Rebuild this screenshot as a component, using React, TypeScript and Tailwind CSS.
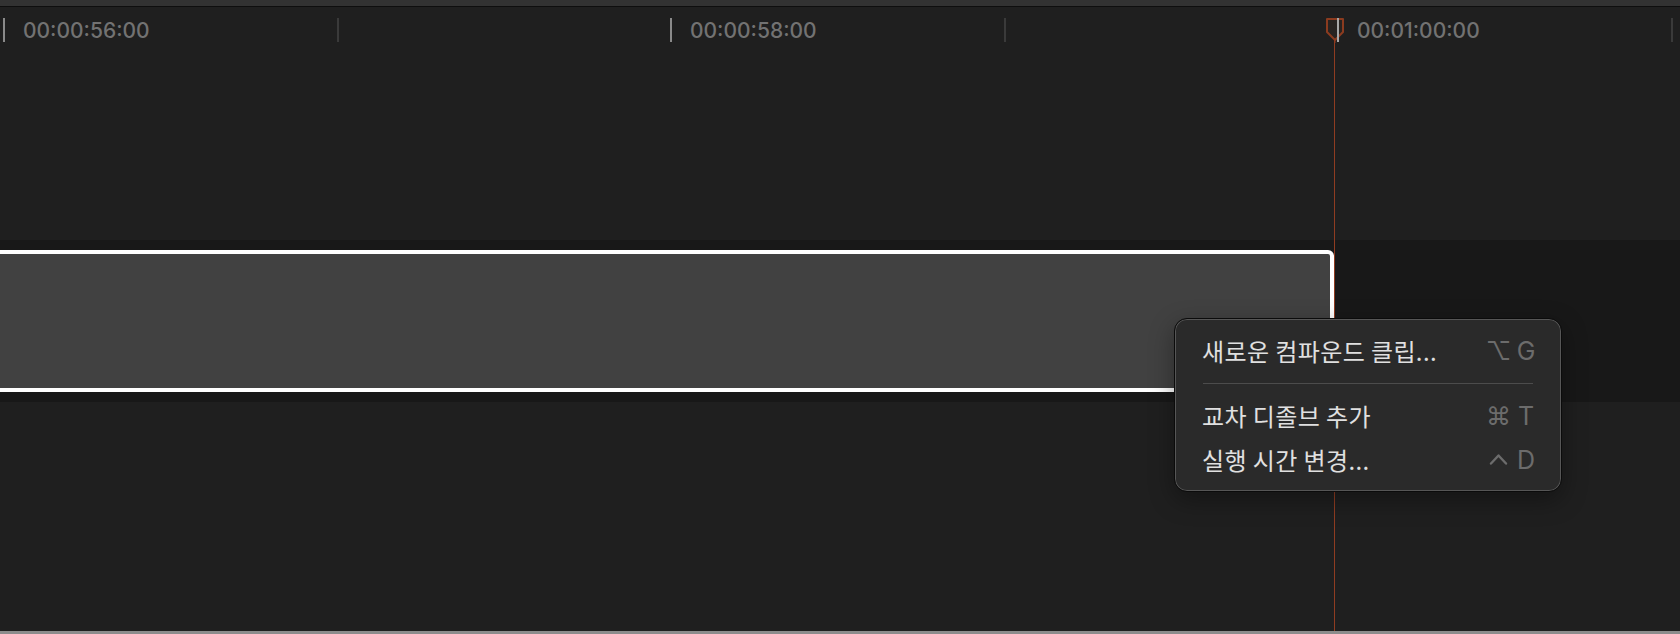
import React from 'react'

const segments = [
  { major: true, label: '00:00:56:00' },
  { major: false },
  { major: true, label: '00:00:58:00' },
  { major: false },
  { major: true, label: '00:01:00:00' },
  { major: false },
]

type Item = { label: string; mod: React.ReactNode; k: string }

const Ctrl = () => (
  <svg width="19" height="12" viewBox="0 0 19 12" className="mt-[-2px]">
    <path d="M2 10.5 L9.5 2.5 L17 10.5" fill="none" stroke="#6c6c6c" strokeWidth="2.4" strokeLinecap="round" strokeLinejoin="round" />
  </svg>
)

const MenuRow = ({ label, mod, k }: Item) => (
  <div className="flex h-[44px] items-center justify-between pl-[27px] pr-[24px]">
    <span
      className="text-[24px] leading-none tracking-[0.4px] text-[#e0e0e0]"
      style={{ fontFamily: '"Noto Sans CJK KR", "Noto Sans", sans-serif' }}
    >
      {label}
    </span>
    <span className="flex items-center gap-[5px] leading-none text-[#6c6c6c]" style={{ fontFamily: 'Inter, "DejaVu Sans", sans-serif' }}>
      <span className="flex w-[23px] justify-center text-[25px]">{mod}</span>
      <span className="w-[22px] text-center text-[25px]">{k}</span>
    </span>
  </div>
)

export default function App() {
  return (
    <div className="relative flex h-[634px] w-full flex-col overflow-hidden bg-[#1f1f1f]">
      {/* window edge */}
      <div className="h-[6px] shrink-0 bg-[#323232]" />
      <div className="h-px shrink-0 bg-[#0e0e0e]" />

      {/* ruler */}
      <div className="flex h-[35px] shrink-0 items-start pl-[3px] pt-[11px]" style={{ fontFamily: 'Inter, sans-serif' }}>
        {segments.map((s, i) => (
          <div key={i} className="flex h-[24px] w-[333.5px] shrink-0 items-center">
            <div className={`h-[24px] w-[2px] ${s.major ? 'bg-[#8a8a8a]' : 'bg-[#3a3a3a]'}`} />
            {s.label && (
              <span className="ml-[18px] mt-[1px] text-[21px] font-medium leading-none text-[#727272]">{s.label}</span>
            )}
          </div>
        ))}
      </div>

      {/* tracks */}
      <div className="h-[198px] shrink-0" />
      <div className="h-[162px] shrink-0 bg-[#181818] pt-[10px]">
        <div className="ml-[-10px] h-[142px] w-[1344px] rounded-[6px] border-4 border-white bg-[#414141]" />
      </div>
      <div className="flex-1" />
      <div className="h-[3px] shrink-0 bg-[#8c8c8c]" />

      {/* playhead */}
      <div className="absolute bottom-[3px] left-[1334px] top-[40px] w-px bg-[#8f3c21]" />
      <svg className="absolute left-[1325px] top-[17px]" width="20" height="26" viewBox="0 0 20 26">
        <path d="M2 2 H18 V15 L10 23 L2 15 Z" fill="#2a2422" fillOpacity="0.85" stroke="#8b3b1f" strokeWidth="2" strokeLinejoin="round" />
        <rect x="12" y="1" width="2" height="24" fill="#a8a8a8" />
        <rect x="9.5" y="22" width="1" height="4" fill="#8f3c21" />
      </svg>

      {/* context menu */}
      <div className="absolute left-[1174px] top-[318px] w-[388px] rounded-[13px] border border-[#0b0b0b] bg-[#2a2a2a] pb-[9px] pt-[10px] shadow-[inset_0_0_0_1px_#565656,0_8px_24px_rgba(0,0,0,0.35)]">
        <MenuRow label="새로운 컴파운드 클립..." mod="⌥" k="G" />
        <div className="flex h-[21px] items-center px-[28px]">
          <div className="h-px w-full bg-[#4c4c4c]" />
        </div>
        <MenuRow label="교차 디졸브 추가" mod="⌘" k="T" />
        <MenuRow label="실행 시간 변경..." mod={<Ctrl />} k="D" />
      </div>
    </div>
  )
}
